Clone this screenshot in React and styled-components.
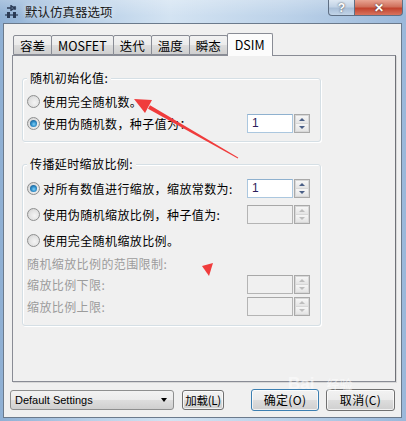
import React from 'react';
import styled, { createGlobalStyle } from 'styled-components';

const GlobalStyle = createGlobalStyle`
  html, body {
    margin: 0;
    padding: 0;
    background: #ffffff;
  }
  body {
    font-family: "Noto Sans CJK SC", "Noto Sans", "Liberation Sans", sans-serif;
    font-size: 12px;
    color: #000;
  }
`;

// 窗口外框 (Aero)
const Window = styled.div`
  position: relative;
  width: 406px;
  height: 421px;
  display: flex;
  flex-direction: column;
  box-sizing: border-box;
  overflow: hidden;
  background: linear-gradient(90deg, #8fb0d4 0%, #b9d0e8 22%, #d3e3f2 42%, #bcd2e9 70%, #9ab8da 100%);
`;

const TitleBar = styled.div`
  height: 23px;
  flex: none;
  display: flex;
  align-items: flex-start;
  background: linear-gradient(180deg, rgba(255, 255, 255, 0.25), rgba(255, 255, 255, 0) 70%);
`;

const TitleIcon = styled.svg`
  margin: 5px 0 0 5px;
  flex: none;
`;

const TitleText = styled.div`
  margin-left: 7px;
  line-height: 23px;
  font-size: 12.5px;
  color: #1b1b1b;
  text-shadow: 0 0 6px rgba(255, 255, 255, 0.9);
`;

const CaptionButtons = styled.div`
  margin-left: auto;
  margin-right: 3px;
  display: flex;
`;

const CaptionButton = styled.div`
  width: ${(p) => p.$w}px;
  height: 16px;
  box-sizing: border-box;
  display: flex;
  align-items: center;
  justify-content: center;
  border: 1px solid #5f6f84;
  border-top: none;
  color: #fff;
  font-family: "Liberation Sans", sans-serif;
  font-weight: bold;
  font-size: 12px;
  text-shadow: 0 0 2px #333;
  background: ${(p) =>
    p.$close
      ? 'linear-gradient(180deg, #e8a493 0%, #d0705c 45%, #c2432e 55%, #d8735e 100%)'
      : 'linear-gradient(180deg, #dde7f2 0%, #c2d3e6 45%, #a9bfd8 55%, #c2d4e8 100%)'};
  border-radius: ${(p) => (p.$close ? '0 0 4px 0' : '0 0 0 4px')};
  border-left: ${(p) => (p.$close ? 'none' : '1px solid #5f6f84')};
`;

// 客户区
const Client = styled.div`
  flex: 1;
  margin: 0 4px 3px 3px;
  background: #f0f0f0;
  border: 1px solid #6b7a8c;
  display: flex;
  flex-direction: column;
  padding: 9px 6px 0 6px;
`;

const TabArea = styled.div`
  margin-left: 2px;
  width: 384px;
  display: flex;
  flex-direction: column;
`;

const TabStrip = styled.div`
  display: flex;
  align-items: flex-end;
  height: 22px;
  padding-left: 1px;
`;

const Tab = styled.div`
  position: relative;
  box-sizing: border-box;
  height: ${(p) => (p.$active ? 23 : 20)}px;
  margin: ${(p) => (p.$active ? '0 -1px -1px -1px' : '0 0 0 -1px')};
  padding: ${(p) => (p.$active ? '0 7px' : '0 6px')};
  line-height: ${(p) => (p.$active ? 21 : 19)}px;
  border: 1px solid #898c95;
  border-bottom: ${(p) => (p.$active ? 'none' : '1px solid #898c95')};
  border-radius: 2px 2px 0 0;
  font-size: 12.5px;
  z-index: ${(p) => (p.$active ? 2 : 1)};
  background: ${(p) =>
    p.$active ? '#fcfcfc' : 'linear-gradient(180deg, #f2f2f2 0%, #ebebeb 50%, #dddddd 51%, #cfcfcf 100%)'};
  &:first-child {
    margin-left: 0;
  }
`;

const TabPanel = styled.div`
  height: 327px;
  box-sizing: border-box;
  border: 1px solid #898c95;
  border-right-color: #6f7177;
  box-shadow: 1px 1px 0 #d8d8d8;
  background: #f0f0f0;
  padding: 22px 0 0 9px;
  display: flex;
  flex-direction: column;
`;

const GroupBox = styled.div`
  position: relative;
  width: 299px;
  box-sizing: border-box;
  margin-top: ${(p) => p.$top || 0}px;
  border: 1px solid #d5dfe5;
  border-radius: 3px;
  box-shadow: inset 1px 1px 0 #ffffff, 1px 1px 0 #ffffff;
  padding: 11px 10px ${(p) => p.$bottom || 7}px 4px;
`;

const Legend = styled.div`
  position: absolute;
  top: -9px;
  left: 4px;
  padding: 0 3px;
  line-height: 16px;
  background: #f0f0f0;
  letter-spacing: 0.4px;
`;

const Row = styled.div`
  height: ${(p) => p.$h}px;
  display: flex;
  align-items: center;
  justify-content: space-between;
`;

const OptionLabel = styled.div`
  display: flex;
  align-items: center;
  gap: 3px;
  letter-spacing: 0.4px;
  color: ${(p) => (p.$disabled ? '#9c9c9c' : '#000')};
`;

const Radio = styled.span`
  width: 13px;
  height: 13px;
  box-sizing: border-box;
  border-radius: 50%;
  border: 1px solid #8e8f8f;
  flex: none;
  display: flex;
  align-items: center;
  justify-content: center;
  background: radial-gradient(circle at 60% 60%, #f4f4f4 0%, #e2e2e2 55%, #c9c9c9 100%);
  &::after {
    content: '';
    display: ${(p) => (p.$checked ? 'block' : 'none')};
    width: 7px;
    height: 7px;
    border-radius: 50%;
    background: radial-gradient(circle at 55% 60%, #7fd0f5 0%, #2c8ac7 45%, #18456e 100%);
  }
`;

const SpinBox = styled.div`
  display: flex;
  gap: 1px;
  flex: none;
`;

const TextBox = styled.div`
  width: 46px;
  height: 19px;
  box-sizing: border-box;
  border: 1px solid ${(p) => (p.$disabled ? '#b4b4b4' : '#abc7df')};
  border-top-color: ${(p) => (p.$disabled ? '#a8a8a8' : '#8fb1cf')};
  background: ${(p) => (p.$disabled ? '#f0f0f0' : '#ffffff')};
  padding-left: 4px;
  line-height: 17px;
  font-family: "Liberation Sans", sans-serif;
  font-size: 12px;
  color: #2d1d5a;
`;

const Spinner = styled.div`
  width: 16px;
  height: 19px;
  box-sizing: border-box;
  border: 1px solid #a9a9a9;
  background: #d8d8d8;
  display: flex;
  flex-direction: column;
  gap: 1px;
  padding: 1px;
`;

const SpinButton = styled.div`
  flex: 1;
  background: linear-gradient(180deg, #f6f6f6, #e4e4e4);
  display: flex;
  align-items: center;
  justify-content: center;
  &::after {
    content: '';
    width: 0;
    height: 0;
    border-left: 3px solid transparent;
    border-right: 3px solid transparent;
    ${(p) =>
      p.$down
        ? `border-top: 3px solid ${p.$disabled ? '#bdbdbd' : '#4a5f86'};`
        : `border-bottom: 3px solid ${p.$disabled ? '#bdbdbd' : '#4a5f86'};`}
  }
`;

// 底部
const Footer = styled.div`
  display: flex;
  align-items: center;
  height: 23px;
  margin-top: 6px;
`;

const ComboBox = styled.div`
  position: relative;
  width: 164px;
  height: 20px;
  box-sizing: border-box;
  border: 1px solid #8e8f8f;
  border-radius: 3px;
  background: linear-gradient(180deg, #f2f2f2 0%, #ebebeb 50%, #dddddd 51%, #cfcfcf 100%);
  font-family: "Liberation Sans", sans-serif;
  font-size: 11px;
  line-height: 18px;
  padding-left: 4px;
  &::after {
    content: '';
    position: absolute;
    right: 6px;
    top: 7px;
    border-left: 3.5px solid transparent;
    border-right: 3.5px solid transparent;
    border-top: 4px solid #000;
  }
`;

const Button = styled.div`
  width: ${(p) => p.$w}px;
  height: ${(p) => p.$h || 22}px;
  margin-left: ${(p) => p.$ml || 0}px;
  box-sizing: border-box;
  border: 1px solid ${(p) => (p.$default ? '#3c7fb1' : '#707070')};
  border-radius: 3px;
  box-shadow: inset 0 0 0 1px rgba(255, 255, 255, 0.7);
  background: linear-gradient(180deg, #f2f2f2 0%, #ebebeb 50%, #dddddd 51%, #cfcfcf 100%);
  display: flex;
  align-items: center;
  justify-content: center;
  white-space: nowrap;
  font-size: ${(p) => (p.$small ? 11.5 : 12)}px;
  letter-spacing: ${(p) => (p.$small ? -0.3 : 0.3)}px;
`;

const Overlay = styled.svg`
  position: absolute;
  left: 0;
  top: 0;
  pointer-events: none;
`;

const Watermark = styled.div`
  position: absolute;
  left: 288px;
  top: 374px;
  color: rgba(255, 255, 255, 0.55);
  font-family: "Liberation Sans", sans-serif;
  font-weight: bold;
  font-size: 17px;
  pointer-events: none;
  span {
    font-family: "Noto Sans CJK SC", sans-serif;
    font-size: 13px;
    font-weight: normal;
    margin-left: 12px;
  }
`;

const tabs = ['容差', 'MOSFET', '迭代', '温度', '瞬态', 'DSIM'];

const Spin = ({ value, disabled }) => (
  <SpinBox>
    <TextBox $disabled={disabled}>{value}</TextBox>
    <Spinner>
      <SpinButton $disabled={disabled} />
      <SpinButton $down $disabled={disabled} />
    </Spinner>
  </SpinBox>
);

export default function App() {
  return (
    <>
      <GlobalStyle />
      <Window>
        <TitleBar>
          <TitleIcon width="13" height="13" viewBox="0 0 13 13">
            <path d="M6 0v6M2 3h4M6 1l4 2-4 2" stroke="#2b3b55" strokeWidth="1.4" fill="none" />
            <path d="M10 1v4" stroke="#2b3b55" strokeWidth="1.4" />
            <rect x="2" y="7" width="3" height="6" fill="#2b3b55" />
            <rect x="8" y="7" width="3" height="6" fill="#2b3b55" />
            <path d="M0 10h13" stroke="#2b3b55" strokeWidth="1.2" />
          </TitleIcon>
          <TitleText>默认仿真器选项</TitleText>
          <CaptionButtons>
            <CaptionButton $w={27}>?</CaptionButton>
            <CaptionButton $w={48} $close>✕</CaptionButton>
          </CaptionButtons>
        </TitleBar>

        <Client>
          <TabArea>
            <TabStrip>
              {tabs.map((t) => (
                <Tab key={t} $active={t === 'DSIM'}>
                  {t}
                </Tab>
              ))}
            </TabStrip>
            <TabPanel>
              <GroupBox>
                <Legend>随机初始化值:</Legend>
                <Row $h={22}>
                  <OptionLabel>
                    <Radio />
                    使用完全随机数。
                  </OptionLabel>
                </Row>
                <Row $h={22}>
                  <OptionLabel>
                    <Radio $checked />
                    使用伪随机数，种子值为：
                  </OptionLabel>
                  <Spin value="1" />
                </Row>
              </GroupBox>

              <GroupBox $top={22} $bottom={8}>
                <Legend>传播延时缩放比例:</Legend>
                <Row $h={25}>
                  <OptionLabel>
                    <Radio $checked />
                    对所有数值进行缩放，缩放常数为:
                  </OptionLabel>
                  <Spin value="1" />
                </Row>
                <Row $h={27}>
                  <OptionLabel>
                    <Radio />
                    使用伪随机缩放比例，种子值为:
                  </OptionLabel>
                  <Spin disabled />
                </Row>
                <Row $h={24}>
                  <OptionLabel>
                    <Radio />
                    使用完全随机缩放比例。
                  </OptionLabel>
                </Row>
                <Row $h={22}>
                  <OptionLabel $disabled>随机缩放比例的范围限制:</OptionLabel>
                </Row>
                <Row $h={21}>
                  <OptionLabel $disabled>缩放比例下限:</OptionLabel>
                  <Spin disabled />
                </Row>
                <Row $h={22}>
                  <OptionLabel $disabled>缩放比例上限:</OptionLabel>
                  <Spin disabled />
                </Row>
              </GroupBox>
            </TabPanel>
          </TabArea>

          <Footer>
            <ComboBox>Default Settings</ComboBox>
            <Button $w={42} $h={20} $ml={8} $small>加载(L)</Button>
            <Button $w={68} $ml={27} $default>确定(O)</Button>
            <Button $w={69} $ml={7}>取消(C)</Button>
          </Footer>
        </Client>

        <Watermark>
          Bai<span>经验</span>
        </Watermark>

        <Overlay width="406" height="421" viewBox="0 0 406 421">
          <polygon points="150,105.3 148,108.7 237.8,158.4 238.2,157.6" fill="#f03c3c" />
          <polygon points="134,99 152,100 145,113" fill="#f03c3c" />
          <polygon points="202,266 213,263 209,276" fill="#f03c3c" />
        </Overlay>
      </Window>
    </>
  );
}
